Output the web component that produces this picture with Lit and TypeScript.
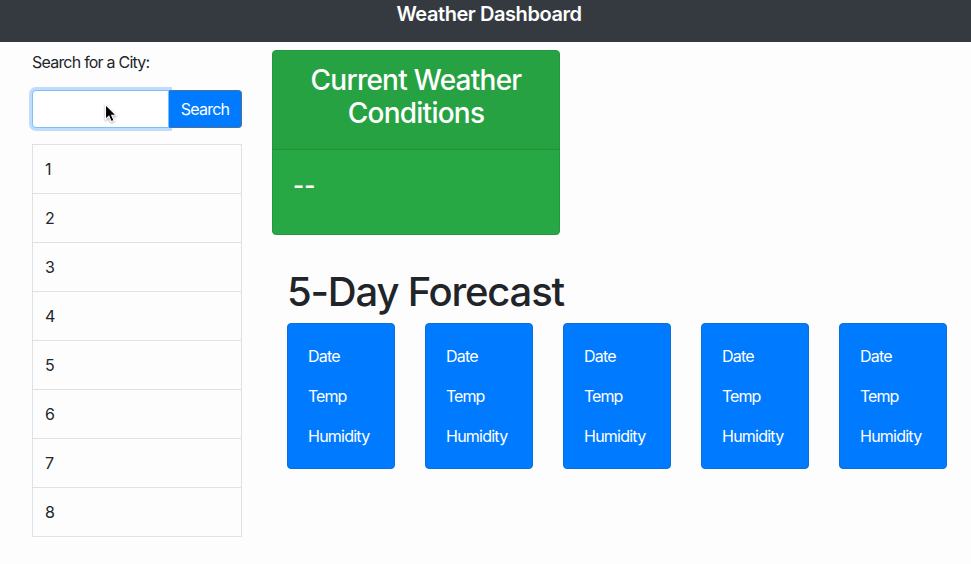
import { LitElement, html, css } from "lit";
import { customElement } from "lit/decorators.js";

@customElement("forecast-card")
class ForecastCard extends LitElement {
  static styles = css`
    :host {
      display: flex;
      flex-direction: column;
      gap: 16px;
      box-sizing: border-box;
      width: 108px;
      height: 146px;
      padding: 20px;
      color: #fff;
      background: #007bff;
      border: 1px solid #0b6fdc;
      border-radius: 4px;
    }
    .line {
      line-height: 24px;
      white-space: nowrap;
    }
    .date { letter-spacing: -0.8px; }
    .temp { letter-spacing: -1px; }
    .humidity { letter-spacing: -0.76px; }
  `;
  render() {
    return html`
      <div class="line date">Date</div>
      <div class="line temp">Temp</div>
      <div class="line humidity">Humidity</div>
    `;
  }
}

@customElement("app-root")
class AppRoot extends LitElement {
  static styles = css`
    :host {
      display: block;
      height: 564px;
      overflow: hidden;
      background: #fdfdfd;
      color: #212529;
      font: 400 16px/24px Inter, "Liberation Sans", sans-serif;
    }
    * { box-sizing: border-box; }
    h1, h2, h3, p, ul { margin: 0; padding: 0; font-weight: 500; }
    header {
      height: 42px;
      padding: 2px 0 0 7px;
      background: #343a40;
      color: #fff;
      text-align: center;
    }
    .title { font-size: 20px; line-height: 24px; font-weight: 600; letter-spacing: -0.43px; }
    .layout { display: flex; padding: 8px 0 0 32px; }
    aside { width: 210px; margin-right: 30px; }
    .label { display: block; margin-bottom: 16px; letter-spacing: -0.78px; }
    .search { position: relative; display: flex; height: 38px; margin-bottom: 16px; }
    .field {
      width: 137px;
      height: 38px;
      padding: 6px 12px;
      font: inherit;
      color: #495057;
      background: #fff;
      border: 1px solid #80bdff;
      border-radius: 4px 0 0 4px;
      box-shadow: 0 0 0 3px #bfdcfb;
      outline: none;
    }
    .button {
      position: relative;
      width: 73px;
      height: 38px;
      padding: 0 1px 0 0;
      font: inherit;
      letter-spacing: -0.75px;
      color: #fff;
      background: #007bff;
      border: 1px solid #4d7296;
      border-left-color: #007bff;
      border-radius: 0 4px 4px 0;
    }
    .pointer { position: absolute; left: 71px; top: 13px; width: 16px; height: 22px; filter: drop-shadow(0 1px 1px rgba(0, 0, 0, 0.35)); }
    .history { list-style: none; border: 1px solid #dee2e6; font-weight: 400; }
    .city { height: 49px; padding: 12px; border-bottom: 1px solid #dee2e6; }
    .city:last-child { height: 48px; border-bottom: 0; }
    .current {
      width: 288px;
      height: 185px;
      color: #fff;
      background: #28a745;
      border: 1px solid #249640;
      border-radius: 4px;
      overflow: hidden;
    }
    .current-head {
      height: 99px;
      padding: 13px 20px 0;
      background: #27a243;
      border-bottom: 1px solid #229039;
      text-align: center;
    }
    .current-title { font-size: 28px; line-height: 33px; letter-spacing: -0.75px; }
    .current-body { padding: 19px 20px; font-size: 24px; font-weight: 600; line-height: 33px; }
    .forecast { padding: 33px 0 0 15px; }
    .forecast-title { font-size: 40px; line-height: 48px; margin-bottom: 7px; letter-spacing: -1.2px; }
    .days { display: flex; gap: 30px; }
  `;

  render() {
    return html`
      <header><h1 class="title">Weather Dashboard</h1></header>
      <div class="layout">
        <aside>
          <label class="label" for="city">Search for a City:</label>
          <div class="search">
            <input class="field" id="city" type="text" />
            <button class="button">Search</button>
            <svg class="pointer" viewBox="0 0 16 22">
              <path d="M2.500 1.500v15l3.400-3.200 2.300 5.300 2.800-1.200-2.300-5.200H13z" fill="#000" stroke="#fff" stroke-width="1.1" />
            </svg>
          </div>
          <ul class="history">
            ${[1, 2, 3, 4, 5, 6, 7, 8].map((n) => html`<li class="city">${n}</li>`)}
          </ul>
        </aside>
        <main>
          <section class="current">
            <div class="current-head"><h3 class="current-title">Current Weather Conditions</h3></div>
            <div class="current-body">--</div>
          </section>
          <section class="forecast">
            <h2 class="forecast-title">5-Day Forecast</h2>
            <div class="days">
              ${[0, 1, 2, 3, 4].map(() => html`<forecast-card></forecast-card>`)}
            </div>
          </section>
        </main>
      </div>
    `;
  }
}
